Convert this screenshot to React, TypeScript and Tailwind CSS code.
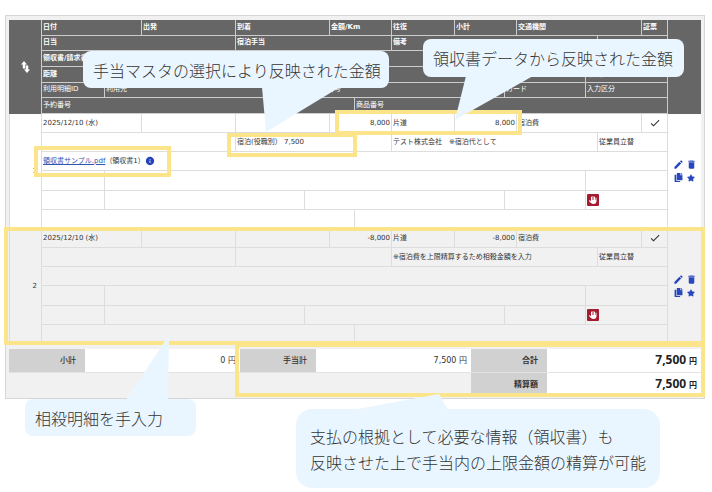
import type { ReactNode } from "react";
import { FaCopy, FaStar } from "react-icons/fa";
import { FaHand } from "react-icons/fa6";
import { MdCheck, MdDelete, MdEdit, MdInfo } from "react-icons/md";

interface Cell {
	span: number;
	content?: ReactNode;
	align?: "right" | "center";
}

interface ExpenseRecord {
	id: number;
	date: string;
	allowance?: string;
	amount: string;
	note: string;
	receipt?: { name: string; label: string };
}

// Shared column grid: every row below spans parts of it
const columnWidths = [
	"w-[32px]",
	"w-[63px]",
	"w-[37px]",
	"w-[94px]",
	"w-[69px]",
	"w-[25px]",
	"w-[25px]",
	"w-[37px]",
	"w-[63px]",
	"w-[50px]",
	"w-[12px]",
	"w-[69px]",
	"w-[12px]",
	"w-[44px]",
	"w-[26px]",
	"w-[34px]",
];

const headerRows: Cell[][] = [
	[
		{ span: 2, content: "日付" },
		{ span: 1, content: "出発" },
		{ span: 2, content: "到着" },
		{ span: 2, content: "金額/Km" },
		{ span: 1, content: "往復" },
		{ span: 2, content: "小計" },
		{ span: 3, content: "交通機関" },
		{ span: 1, content: "証票" },
	],
	[
		{ span: 3, content: "日当" },
		{ span: 4, content: "宿泊手当" },
		{ span: 5, content: "備考" },
		{ span: 2 },
	],
	[{ span: 14, content: "領収書/請求書" }],
	[
		{ span: 1, content: "距離" },
		{ span: 10 },
		{ span: 3, content: "購入区分" },
	],
	[
		{ span: 1, content: "利用明細ID" },
		{ span: 3, content: "利用先" },
		{ span: 5, content: "カード番号" },
		{ span: 2, content: "カード" },
		{ span: 3, content: "入力区分" },
	],
	[
		{ span: 6, content: "予約番号" },
		{ span: 8, content: "商品番号" },
	],
];

const records: ExpenseRecord[] = [
	{
		id: 1,
		date: "2025/12/10 (水)",
		allowance: "宿泊(役職別） 7,500",
		amount: "8,000",
		note: "テスト株式会社　※宿泊代として",
		receipt: { name: "領収書サンプル.pdf", label: "（領収書1）" },
	},
	{
		id: 2,
		date: "2025/12/10 (水)",
		amount: "-8,000",
		note: "※宿泊費を上限精算するため相殺金額を入力",
	},
];

function recordRows(record: ExpenseRecord): Cell[][] {
	return [
		[
			{ span: 2, content: record.date },
			{ span: 1 },
			{ span: 2 },
			{ span: 2, content: record.amount, align: "right" },
			{ span: 1, content: "片道" },
			{ span: 2, content: record.amount, align: "right" },
			{ span: 3, content: "宿泊費" },
			{
				span: 1,
				content: <MdCheck className="inline w-3 h-3" />,
				align: "center",
			},
		],
		[
			{ span: 3 },
			{ span: 4, content: record.allowance },
			{ span: 5, content: record.note },
			{ span: 2, content: "従業員立替" },
		],
		[
			{
				span: 14,
				content: record.receipt && (
					<div className="flex items-center">
						<a href="#receipt" className="text-[#2f55b5] underline">
							{record.receipt.name}
						</a>
						<span>{record.receipt.label}</span>
						<MdInfo className="w-[10px] h-[10px] text-[#2443b8]" />
					</div>
				),
			},
		],
		[{ span: 1 }, { span: 10 }, { span: 3 }],
		[
			{ span: 1 },
			{ span: 3 },
			{ span: 5 },
			{ span: 2 },
			{
				span: 3,
				content: (
					<span className="flex items-center justify-center w-3 h-3 rounded-[1px] bg-[#a51c30] text-white">
						<FaHand className="w-2 h-2" />
					</span>
				),
			},
		],
		[{ span: 6 }, { span: 8 }],
	];
}

const alignClass = {
	left: "text-left",
	right: "text-right",
	center: "text-center",
};

function SortIcon() {
	return (
		<svg viewBox="0 0 18 24" className="w-[9px] h-3" fill="currentColor">
			<path d="M6 0 L12 7 H8.5 V15 H3.5 V7 H0 Z" />
			<path d="M12 24 L6 17 H9.5 V9 H14.5 V17 H18 Z" />
		</svg>
	);
}

function RecordActions() {
	return (
		<div className="grid grid-cols-2 w-[26px] mx-auto text-[#2846bd]">
			<button
				aria-label="編集"
				className="flex items-center justify-center h-[13px]"
			>
				<MdEdit className="w-[11px] h-[11px]" />
			</button>
			<button
				aria-label="削除"
				className="flex items-center justify-center h-[13px]"
			>
				<MdDelete className="w-[11px] h-[11px]" />
			</button>
			<button
				aria-label="複製"
				className="flex items-center justify-center h-[13px]"
			>
				<FaCopy className="w-[9px] h-[9px]" />
			</button>
			<button
				aria-label="お気に入り"
				className="flex items-center justify-center h-[13px]"
			>
				<FaStar className="w-2 h-2" />
			</button>
		</div>
	);
}

function ExpenseTable() {
	return (
		<table className="w-full table-fixed border-separate border-spacing-0 text-[7px] leading-[11px] text-[#333]">
			<colgroup>
				{columnWidths.map((width, i) => (
					<col key={i} className={width} />
				))}
			</colgroup>
			<thead className="bg-[#666] text-white">
				{headerRows.map((cells, rowIndex) => (
					<tr key={rowIndex} className="h-[15px]">
						{rowIndex === 0 && (
							<td rowSpan={6} className="h-[94px] p-0 text-center">
								<button aria-label="並べ替え" className="align-middle">
									<SortIcon />
								</button>
							</td>
						)}
						{cells.map((cell, i) => (
							<th
								key={i}
								colSpan={cell.span}
								className={`py-0 px-px text-left whitespace-nowrap border-l border-b border-[#ccc] ${
									rowIndex < 4 ? "font-bold" : "font-normal"
								}`}
							>
								{cell.content}
							</th>
						))}
						{rowIndex === 0 && (
							<td rowSpan={6} className="p-0 border-l border-[#ccc]" />
						)}
					</tr>
				))}
			</thead>
			{records.map((record) => (
				<tbody key={record.id} className="bg-white even:bg-[#f1f1f1]">
					{recordRows(record).map((cells, rowIndex) => (
						<tr key={rowIndex} className="h-[19px]">
							{rowIndex === 0 && (
								<td
									rowSpan={6}
									className="h-[115px] py-0 pr-1 text-right border-l border-b border-[#ddd]"
								>
									{record.id}
								</td>
							)}
							{cells.map((cell, i) => (
								<td
									key={i}
									colSpan={cell.span}
									className={`py-0 px-px whitespace-nowrap border-l border-b border-[#ddd] ${
										alignClass[cell.align ?? "left"]
									}`}
								>
									{cell.content}
								</td>
							))}
							{rowIndex === 0 && (
								<td rowSpan={6} className="p-0 border-l border-b border-[#ddd]">
									<RecordActions />
								</td>
							)}
						</tr>
					))}
				</tbody>
			))}
		</table>
	);
}

function TotalLabel({
	children,
	strong,
}: {
	children: string;
	strong?: boolean;
}) {
	return (
		<th
			className={`py-0 pr-[9px] bg-[#d1d1d1] border-b border-[#e3e3e3] text-right ${
				strong ? "font-bold" : "font-medium"
			}`}
		>
			{children}
		</th>
	);
}

function TotalValue({ value, strong }: { value: string; strong?: boolean }) {
	return (
		<td
			className={`py-0 pr-1 bg-white border-b border-[#e3e3e3] text-right ${
				strong ? "font-bold text-[#222]" : ""
			}`}
		>
			<span className={strong ? "font-['Noto_Sans'] text-[12px]" : ""}>
				{value}
			</span>{" "}
			円
		</td>
	);
}

function Totals() {
	return (
		<table className="w-full mt-[5px] table-fixed border-separate border-spacing-0 text-[8px] leading-[16px] text-[#333]">
			<colgroup>
				<col className="w-[76px]" />
				<col className="w-[155px]" />
				<col className="w-[76px]" />
				<col className="w-[155px]" />
				<col className="w-[76px]" />
				<col className="w-[154px]" />
			</colgroup>
			<tbody>
				<tr className="h-6">
					<TotalLabel>小計</TotalLabel>
					<TotalValue value="0" />
					<TotalLabel>手当計</TotalLabel>
					<TotalValue value="7,500" />
					<TotalLabel strong>合計</TotalLabel>
					<TotalValue value="7,500" strong />
				</tr>
				<tr className="h-6">
					<td colSpan={4} />
					<TotalLabel strong>精算額</TotalLabel>
					<TotalValue value="7,500" strong />
				</tr>
			</tbody>
		</table>
	);
}

// Yellow frames drawn over the areas that the callouts explain
const highlights = [
	"left-[335px] top-[110px] w-[187px] h-[25px]",
	"left-[227px] top-[133px] w-[130px] h-[24px]",
	"left-[34px] top-[146px] w-[137px] h-[31px]",
	"left-[4px] top-[227px] w-[701px] h-[118px]",
	"left-[235px] top-[343px] w-[470px] h-[54px]",
];

const callouts = [
	{
		text: "手当マスタの選択により反映された金額",
		box: "left-[83px] top-[51px] w-[306px] h-[37px] rounded-lg pl-[10px]",
		tail: "262,87 266,132 340,87",
	},
	{
		text: "領収書データから反映された金額",
		box: "left-[423px] top-[39px] w-[261px] h-[38px] rounded-lg pl-[10px]",
		tail: "466,76 455,120 533,76",
	},
	{
		text: "相殺明細を手入力",
		box: "left-[25px] top-[399px] w-[171px] h-[37px] rounded-lg pl-[10px]",
		tail: "126,400 169,335 168,400",
	},
	{
		text: "支払の根拠として必要な情報（領収書）も\n反映させた上で手当内の上限金額の精算が可能",
		box: "left-[296px] top-[409px] w-[364px] h-[79px] rounded-2xl pl-[14px]",
		tail: "352,410 439,394 448,410",
	},
];

export default function App() {
	return (
		<main
			lang="ja"
			className="relative min-h-screen overflow-hidden pt-[15px] pl-[5px] pr-[7px] bg-white font-['DejaVu_Sans','Noto_Sans_CJK_JP',sans-serif]"
		>
			<section className="px-[3px] pt-1 pb-px border border-[#d6d6d6] bg-[#f1f1f1]">
				<ExpenseTable />
				<Totals />
			</section>

			{highlights.map((position) => (
				<div
					key={position}
					className={`absolute border-4 border-[#fce48b] pointer-events-none ${position}`}
				/>
			))}

			<svg
				className="absolute left-0 top-0 w-[712px] h-[492px] pointer-events-none"
				viewBox="0 0 712 492"
				fill="#eaf6ff"
				aria-hidden="true"
			>
				{callouts.map((callout) => (
					<polygon key={callout.tail} points={callout.tail} />
				))}
			</svg>
			{callouts.map((callout) => (
				<p
					key={callout.text}
					className={`absolute flex items-center bg-[#eaf6ff] text-[#333] font-['Noto_Sans_CJK_JP',sans-serif] font-light text-[16px] leading-[26px] whitespace-pre ${callout.box}`}
				>
					{callout.text}
				</p>
			))}
		</main>
	);
}
